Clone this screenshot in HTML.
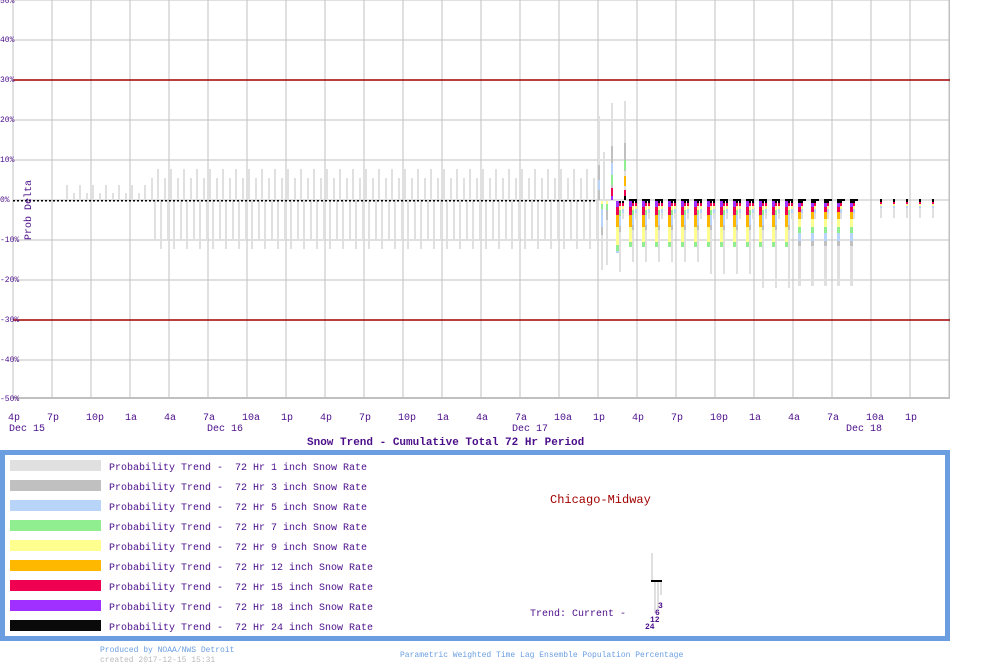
<!DOCTYPE html>
<html><head><meta charset="utf-8"><style>
body{margin:0;background:#fff;width:1000px;height:670px;overflow:hidden;font-family:"Liberation Mono",monospace;}
svg{position:absolute;left:0;top:0}
text{white-space:pre}
</style></head><body>
<svg id="s" width="1000" height="670" xmlns="http://www.w3.org/2000/svg" font-family="Liberation Mono, monospace" xml:space="preserve">
<rect x="0" y="0" width="1000" height="670" fill="#fff"/>
<g id="grid"></g>
<g id="bars"></g>
<line x1="13" y1="80" x2="950" y2="80" stroke="#a00000" stroke-width="1.5"/>
<line x1="13" y1="320" x2="950" y2="320" stroke="#a00000" stroke-width="1.5"/>
<g fill="#4b0e8a" font-size="8">
<text x="0" y="3">50%</text><text x="0" y="42">40%</text><text x="0" y="82">30%</text><text x="0" y="122">20%</text><text x="0" y="162">10%</text><text x="0" y="202">0%</text><text x="0" y="242">-10%</text><text x="0" y="282">-20%</text><text x="0" y="322">-30%</text><text x="0" y="362">-40%</text><text x="0" y="401">-50%</text>
</g>
<text transform="translate(31,240) rotate(-90)" fill="#4b0e8a" font-size="10">Prob Delta</text>
<g id="xl" fill="#4b0e8a" font-size="10"></g>
<g fill="#4b0e8a" font-size="10">
<text x="9" y="431">Dec 15</text><text x="207" y="431">Dec 16</text><text x="512" y="431">Dec 17</text><text x="846" y="431">Dec 18</text>
</g>
<text x="307" y="445" fill="#4b0e8a" font-size="11" font-weight="bold">Snow Trend - Cumulative Total 72 Hr Period</text>
<rect x="2.5" y="452.5" width="945" height="186" fill="none" stroke="#6a9ee0" stroke-width="5"/>
<g id="leg" font-size="10" fill="#4b0e8a"></g>
<text x="550" y="503" fill="#a00000" font-size="12">Chicago-Midway</text>
<text x="530" y="616" fill="#4b0e8a" font-size="10">Trend: Current -</text>
<rect x="651" y="553" width="2" height="27" fill="#e0e0e0"/>
<rect x="654" y="581" width="2" height="32" fill="#e0e0e0"/>
<rect x="657" y="581" width="2" height="28" fill="#e0e0e0"/>
<rect x="660" y="581" width="2" height="14" fill="#e0e0e0"/>
<rect x="651" y="580" width="11" height="2" fill="#000"/>
<g fill="#4b0e8a" font-size="8" font-weight="bold"><text x="658" y="608">3</text><text x="655" y="615">6</text><text x="650" y="622">12</text><text x="645" y="629">24</text></g>
<text x="100" y="652" fill="#6a9ee0" font-size="8">Produced by NOAA/NWS Detroit</text>
<text x="100" y="662" fill="#bbb" font-size="8">created 2017-12-15 15:31</text>
<text x="400" y="657" fill="#6a9ee0" font-size="8">Parametric Weighted Time Lag Ensemble Population Percentage</text>
</svg>
<script>
var NS="http://www.w3.org/2000/svg";
function R(p,x,y,w,h,c){var r=document.createElementNS(NS,"rect");r.setAttribute("x",x);r.setAttribute("y",y);r.setAttribute("width",w);r.setAttribute("height",h);r.setAttribute("fill",c);document.getElementById(p).appendChild(r);}
function T(p,x,y,s){var t=document.createElementNS(NS,"text");t.setAttribute("x",x);t.setAttribute("y",y);t.textContent=s;document.getElementById(p).appendChild(t);}
function S(x,w,y,list){for(var i=0;i<list.length;i++){R("bars",x,y,w,list[i][0],list[i][1]);y+=list[i][0];}}
for(var i=0;i<25;i++){R("grid",13+39*i-0.5,0,1,398,"#c0c0c0");}
R("grid",949,0,1,398,"#c0c0c0");
for(var j=0;j<10;j++){R("grid",13,40*j-0.5,937,1,"#c0c0c0");}
R("grid",13,397,937,2,"#c0c0c0");
var L=["4p","7p","10p","1a","4a","7a","10a","1p","4p","7p","10p","1a","4a","7a","10a","1p","4p","7p","10p","1a","4a","7a","10a","1p"];
for(var i=0;i<L.length;i++){T("xl",8+39*i,420,L[i]);}
var C=["#e0e0e0","#c0c0c0","#b8d4f8","#90ee90","#ffff90","#ffb800","#f00050","#a030ff","#0a0a0a"];
var N=["1","3","5","7","9","12","15","18","24"];
for(var k=0;k<9;k++){R("leg",10,460+20*k,91,11,C[k]);T("leg",109,470+20*k,"Probability Trend -  72 Hr "+N[k]+" inch Snow Rate");}
// early grey bars
for(var x=40;x<595;x+=6.5){
 var up=x<150?(x%13<6.5?15:7):(x%13<6.5?31:22);
 if(x<60)up=0;
 R("bars",Math.round(x),200-up,2,up,"#e0e0e0");
 var dn=x<150?0:(x%13<6.5?48:40);
 if(dn)R("bars",Math.round(x)+3,201,2,dn,"#e0e0e0");
}
for(var x=13;x<597;x+=4)R("bars",x,200,2,1.5,"#000");
// tall bars near 598
R("bars",598,116,2,84,"#e0e0e0");R("bars",598,165,2,35,"#c0c0c0");R("bars",598,180,2,10,"#b8d4f8");
R("bars",603,152,2,48,"#e0e0e0");
R("bars",611,103,2,97,"#e0e0e0");R("bars",611,146,2,54,"#c0c0c0");R("bars",611,163,2,15,"#b8d4f8");R("bars",611,175,2,10,"#90ee90");R("bars",611,188,2,8,"#f00050");R("bars",611,196,2,4,"#a030ff");
R("bars",624,101,2,99,"#e0e0e0");R("bars",624,143,2,28,"#c0c0c0");R("bars",624,160,2,10,"#90ee90");R("bars",624,176,2,10,"#ffb800");R("bars",624,190,2,6,"#f00050");R("bars",624,196,2,4,"#000");
// first irregular
S(601,2,201,[[3,"#ffff90"],[5,"#90ee90"],[18,"#b8d4f8"],[8,"#c0c0c0"],[35,"#e0e0e0"]]);
S(606,2,201,[[3,"#ffff90"],[6,"#90ee90"],[10,"#c0c0c0"],[45,"#e0e0e0"]]);
S(616,3,201,[[6,"#a030ff"],[8,"#f00050"],[12,"#ffb800"],[18,"#ffff90"],[6,"#90ee90"],[2,"#b8d4f8"]]);
S(619,2,201,[[2,"#000"],[3,"#f00050"],[4,"#ffff90"],[6,"#90ee90"],[10,"#b8d4f8"],[6,"#c0c0c0"],[40,"#e0e0e0"]]);
S(622,2,201,[[2,"#000"],[3,"#f00050"],[3,"#ffff90"],[4,"#b8d4f8"],[6,"#e0e0e0"]]);
for(var n=0;n<18;n++){
 var x=629+13*n;
 if(x<790){
  S(x,3,201,[[6,"#a030ff"],[8,"#f00050"],[12,"#ffb800"],[15,"#ffff90"],[5,"#90ee90"]]);
  var lg=(x>750)?58:(x>700?44:32);
  S(x+3,2,201,[[2,"#000"],[3,"#f00050"],[4,"#ffff90"],[5,"#90ee90"],[10,"#b8d4f8"],[5,"#c0c0c0"],[lg,"#e0e0e0"]]);
  S(x+6,2,201,[[2,"#000"],[3,"#f00050"],[3,"#ffff90"],[4,"#b8d4f8"],[6,"#e0e0e0"]]);
 } else {
  S(x,3,201,[[2,"#000"],[4,"#a030ff"],[5,"#f00050"],[7,"#ffb800"],[8,"#ffff90"],[6,"#90ee90"],[8,"#b8d4f8"],[5,"#c0c0c0"],[40,"#e0e0e0"]]);
  S(x+3,2,201,[[2,"#000"],[3,"#f00050"],[3,"#ffff90"],[4,"#b8d4f8"],[6,"#e0e0e0"]]);
 }
 R("bars",x,199,8,2,"#000");
}
for(var x=880;x<940;x+=13){S(x,2,199,[[3,"#000"],[2,"#f00050"],[2,"#ffff90"],[2,"#b8d4f8"],[10,"#e0e0e0"]]);}
</script>
</body></html>
